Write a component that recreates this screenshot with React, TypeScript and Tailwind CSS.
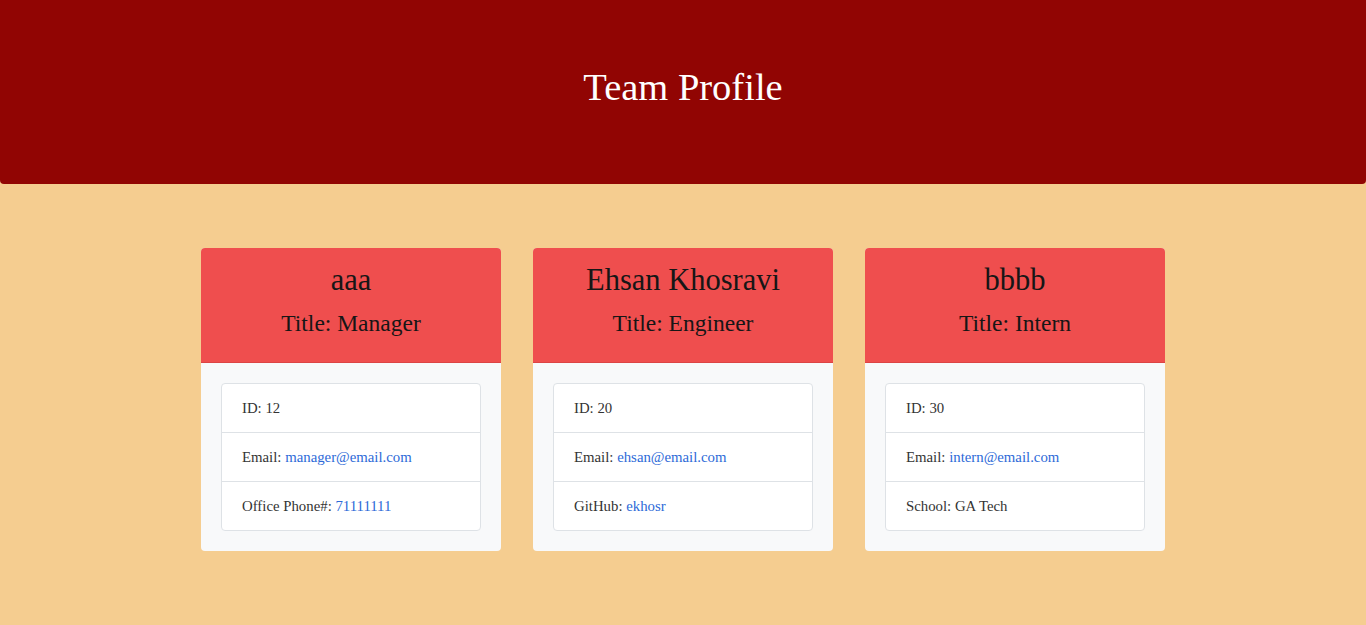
type Member = {
  name: string
  title: string
  id: number
  email: string
  extra: { label: string; value: string; link?: boolean }
}

const team: Member[] = [
  {
    name: 'aaa',
    title: 'Manager',
    id: 12,
    email: 'manager@email.com',
    extra: { label: 'Office Phone#', value: '71111111', link: true },
  },
  {
    name: 'Ehsan Khosravi',
    title: 'Engineer',
    id: 20,
    email: 'ehsan@email.com',
    extra: { label: 'GitHub', value: 'ekhosr', link: true },
  },
  {
    name: 'bbbb',
    title: 'Intern',
    id: 30,
    email: 'intern@email.com',
    extra: { label: 'School', value: 'GA Tech' },
  },
]

function ProfileCard({ member }: { member: Member }) {
  return (
    <div className="flex w-[300px] flex-col overflow-hidden rounded-[4px] bg-[#f8f9fa]">
      <div className="flex h-[115px] flex-col items-center border-b border-[#dc4444] bg-[#ef4e4e] pt-[14px] text-[#161616]">
        <h2 className="text-[30.5px] leading-[36px]">{member.name}</h2>
        <h3 className="mt-[11px] text-[23.5px] leading-[28px]">Title: {member.title}</h3>
      </div>
      <div className="p-5">
        <ul className="rounded-[4px] border border-[#dee2e6] bg-white text-[14.8px] text-[#333]">
          <li className="h-[48px] px-5 leading-[48px]">ID: {member.id}</li>
          <li className="h-[49px] border-t border-[#dee2e6] px-5 leading-[48px]">
            Email: <a className="text-[#2d6ad8]">{member.email}</a>
          </li>
          <li className="h-[49px] border-t border-[#dee2e6] px-5 leading-[48px]">
            {member.extra.label}:{' '}
            {member.extra.link ? (
              <a className="text-[#2d6ad8]">{member.extra.value}</a>
            ) : (
              member.extra.value
            )}
          </li>
        </ul>
      </div>
    </div>
  )
}

export default function App() {
  return (
    <div className="min-h-[625px] bg-[#f5cd90] font-['Liberation_Serif',serif]">
      <header className="flex h-[184px] items-center justify-center rounded-b-[4px] bg-[#910503]">
        <h1 className="pb-[8px] text-[38.5px] text-white">Team Profile</h1>
      </header>
      <main className="flex justify-center gap-8 pt-16">
        {team.map((m) => (
          <ProfileCard key={m.id} member={m} />
        ))}
      </main>
    </div>
  )
}
